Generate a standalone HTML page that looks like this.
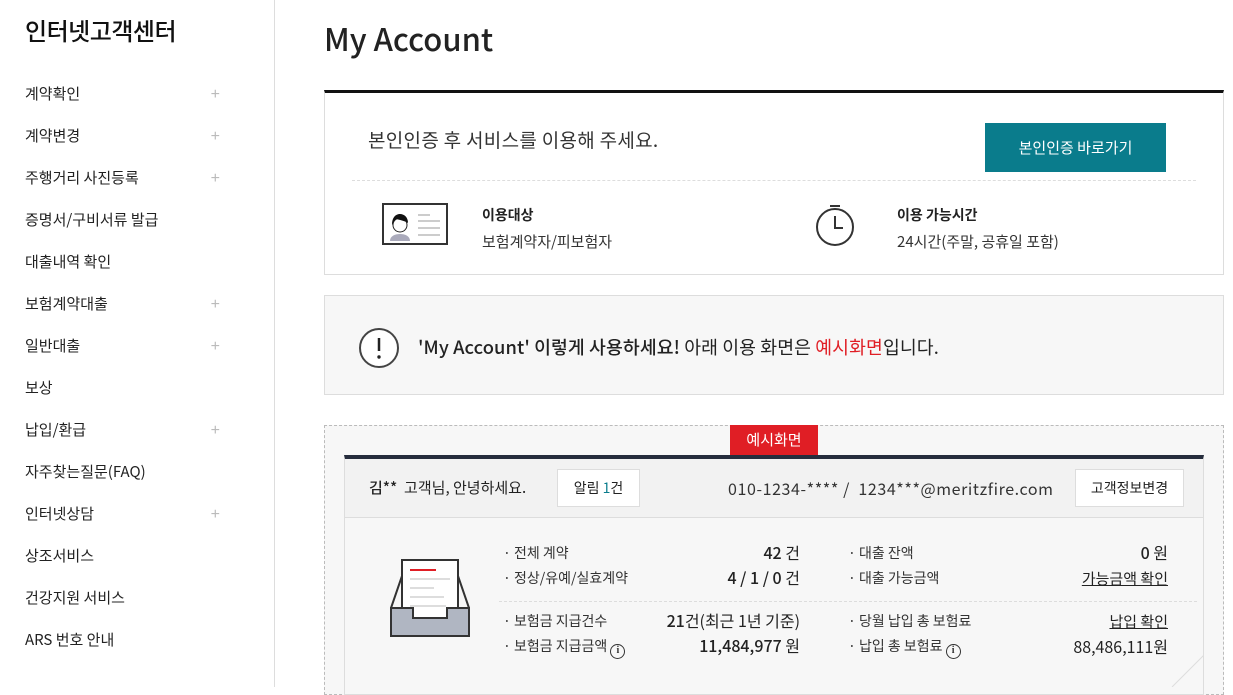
<!DOCTYPE html>
<html><head><meta charset="utf-8"><style>
*{margin:0;padding:0;box-sizing:border-box}
body{width:1233px;height:687px;overflow:hidden;background:#fff;font-family:"Noto Sans CJK KR","Liberation Sans",sans-serif;color:#222;position:relative;line-height:1.2}
.a{position:absolute;white-space:nowrap}
.side{position:absolute;left:0;top:0;width:275px;height:687px;border-right:1px solid #ddd}
.side h1{position:absolute;left:25px;top:16px;font-size:24px;font-weight:500;color:#111;letter-spacing:-0.5px}
.side li{position:absolute;left:25px;list-style:none;font-size:15px;color:#222;width:195px;line-height:20px}
.side li span{position:absolute;right:0;top:1px;color:#bbb;font-size:16px;font-family:"Liberation Sans",sans-serif}
.r{text-align:right}
.i{display:inline-block;width:15px;height:15px;border:1.5px solid #333;border-radius:50%;font-size:10px;text-align:center;line-height:12px;vertical-align:-2px;font-weight:bold;font-family:"Liberation Serif",serif}
b{font-weight:500}
</style></head><body>
<div class="side">
<h1>인터넷고객센터</h1>
<ul>
<li style="top:84px">계약확인<span>+</span></li>
<li style="top:126px">계약변경<span>+</span></li>
<li style="top:168px">주행거리 사진등록<span>+</span></li>
<li style="top:210px">증명서/구비서류 발급</li>
<li style="top:252px">대출내역 확인</li>
<li style="top:294px">보험계약대출<span>+</span></li>
<li style="top:336px">일반대출<span>+</span></li>
<li style="top:378px">보상</li>
<li style="top:420px">납입/환급<span>+</span></li>
<li style="top:462px">자주찾는질문(FAQ)</li>
<li style="top:504px">인터넷상담<span>+</span></li>
<li style="top:546px">상조서비스</li>
<li style="top:588px">건강지원 서비스</li>
<li style="top:630px">ARS 번호 안내</li>
</ul></div>

<div class="a" style="left:324px;top:18px;font-size:31px;font-weight:500;color:#222;line-height:40px">My Account</div>

<div class="a" style="left:324px;top:90px;width:900px;height:185px;border:1px solid #ddd;border-top:3px solid #111"></div>
<div class="a" style="left:368px;top:128px;font-size:19px;color:#333;line-height:24px;letter-spacing:0.3px">본인인증 후 서비스를 이용해 주세요.</div>
<div class="a" style="left:985px;top:123px;width:181px;height:49px;background:#0a7c8c;color:#fff;font-size:15px;text-align:center;line-height:49px">본인인증 바로가기</div>
<div class="a" style="left:352px;top:180px;width:844px;border-top:1px dashed #ddd"></div>
<svg class="a" style="left:382px;top:203px" width="66" height="42" viewBox="0 0 66 42">
<rect x="1" y="1" width="64" height="40" fill="#fff" stroke="#333" stroke-width="2"/>
<path d="M8 38c0-5 5-7 10-7s10 2 10 7z" fill="#aab"/>
<circle cx="18" cy="22" r="7" fill="#fff" stroke="#222"/>
<path d="M10 22c0-8 4-11 8-11s8 3 8 9c-3-2-8-3-12-4-2 2-3 4-4 6z" fill="#111"/>
<path d="M36 12h12M36 18h22M36 25h22M36 32h22" stroke="#ccc" stroke-width="2"/>
</svg>
<div class="a" style="left:482px;top:205px;font-size:14px;font-weight:bold;line-height:20px">이용대상</div>
<div class="a" style="left:482px;top:231px;font-size:15px;color:#333;line-height:22px">보험계약자/피보험자</div>
<svg class="a" style="left:814px;top:203px" width="44" height="44" viewBox="0 0 44 44">
<circle cx="21" cy="24" r="18" fill="none" stroke="#333" stroke-width="2"/>
<path d="M16 3h10M21 13v12h8" stroke="#333" stroke-width="2" fill="none"/>
</svg>
<div class="a" style="left:897px;top:205px;font-size:14px;font-weight:bold;line-height:20px">이용 가능시간</div>
<div class="a" style="left:897px;top:231px;font-size:15px;color:#333;line-height:22px">24시간(주말, 공휴일 포함)</div>

<div class="a" style="left:324px;top:295px;width:900px;height:100px;border:1px solid #ddd;background:#f7f7f7"></div>
<svg class="a" style="left:358px;top:327px" width="42" height="42" viewBox="0 0 42 42"><circle cx="21" cy="21" r="19" fill="#fff" stroke="#444" stroke-width="2"/><path d="M21 11v13" stroke="#222" stroke-width="2.5"/><circle cx="21" cy="30" r="1.7" fill="#222"/></svg>
<div class="a" style="left:418px;top:334px;font-size:18.3px;color:#222;line-height:26px;letter-spacing:0.1px"><b>'My Account' 이렇게 사용하세요!</b> 아래 이용 화면은 <span style="color:#e01e25">예시화면</span>입니다.</div>

<div class="a" style="left:324px;top:425px;width:900px;height:270px;border:1px dashed #bbb;background:#f7f7f7"></div>
<div class="a" style="left:730px;top:425px;width:88px;height:30px;background:#e01e25;color:#fff;font-size:15px;text-align:center;line-height:30px">예시화면</div>
<div class="a" style="left:344px;top:455px;width:860px;height:240px;border:1px solid #ddd;border-top:4px solid #262d3d;background:#f7f7f7"></div>
<div class="a" style="left:345px;top:459px;width:858px;height:59px;background:#f2f2f2;border-bottom:1px solid #ddd"></div>
<div class="a" style="left:369px;top:477px;font-size:15px;line-height:22px"><b>김**</b>&nbsp; 고객님, 안녕하세요.</div>
<div class="a" style="left:557px;top:469px;width:83px;height:38px;border:1px solid #ddd;background:#fff;font-size:14px;text-align:center;line-height:36px">알림 <span style="color:#0a7c8c">1</span>건</div>
<div class="a" style="left:728px;top:477px;font-size:16px;color:#333;line-height:22px;letter-spacing:0.6px">010-1234-**** / &nbsp;1234***@meritzfire.com</div>
<div class="a" style="left:1075px;top:469px;width:109px;height:38px;border:1px solid #ddd;background:#fff;font-size:14px;text-align:center;line-height:36px">고객정보변경</div>

<svg class="a" style="left:390px;top:556px" width="80" height="82" viewBox="0 0 80 82">
<path d="M12 4h56v76H12z" fill="#fff" stroke="#333" stroke-width="2"/>
<path d="M1 52L12 20M79 52L68 20" stroke="#333" stroke-width="2"/>
<path d="M1 52h22v10h34v-10h22v28H1z" fill="#b0b6c2" stroke="#333" stroke-width="2"/>
<path d="M20 14h26" stroke="#e01e25" stroke-width="2"/>
<path d="M20 23h40M20 32h24M20 41h34M20 50h36" stroke="#ddd" stroke-width="2"/>
</svg>

<div class="a" style="left:503px;top:541px;font-size:14px;color:#333;line-height:25px">· 전체 계약<br>· 정상/유예/실효계약</div>
<div class="a r" style="left:640px;top:540px;width:160px;font-size:16px;line-height:25px"><b>42</b> 건<br><b>4 / 1 / 0</b> 건</div>
<div class="a" style="left:499px;top:601px;width:698px;border-top:1px dashed #ddd"></div>
<div class="a" style="left:503px;top:609px;font-size:14px;color:#333;line-height:25px">· 보험금 지급건수<br>· 보험금 지급금액 <span class="i">i</span></div>
<div class="a r" style="left:600px;top:608px;width:200px;font-size:16px;line-height:25px"><b>21</b>건(최근 1년 기준)<br><b>11,484,977</b> 원</div>

<div class="a" style="left:848px;top:541px;font-size:14px;color:#333;line-height:25px">· 대출 잔액<br>· 대출 가능금액</div>
<div class="a r" style="left:1000px;top:540px;width:168px;font-size:16px;line-height:25px"><b>0</b> 원<br><span style="font-size:15px;text-decoration:underline">가능금액 확인</span></div>
<div class="a" style="left:848px;top:609px;font-size:14px;color:#333;line-height:25px">· 당월 납입 총 보험료<br>· 납입 총 보험료 <span class="i">i</span></div>
<div class="a r" style="left:1000px;top:608px;width:168px;font-size:16px;line-height:25px"><span style="font-size:15px;text-decoration:underline">납입 확인</span><br>88,486,111원</div>
<svg class="a" style="left:1170px;top:655px" width="34" height="32"><path d="M34 0L2 32" stroke="#ddd"/></svg>
</body></html>
